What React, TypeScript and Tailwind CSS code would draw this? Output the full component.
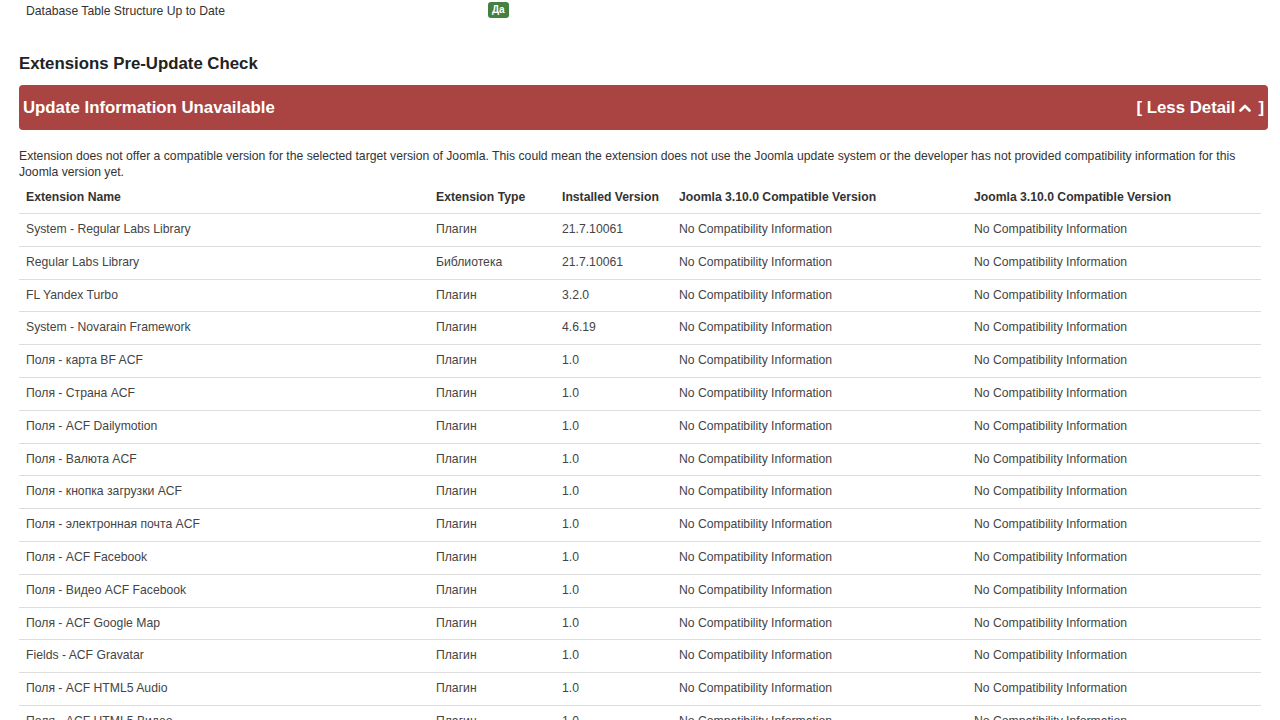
import React from "react";

const rows: [string, string, string][] = [
  ["System - Regular Labs Library", "Плагин", "21.7.10061"],
  ["Regular Labs Library", "Библиотека", "21.7.10061"],
  ["FL Yandex Turbo", "Плагин", "3.2.0"],
  ["System - Novarain Framework", "Плагин", "4.6.19"],
  ["Поля - карта BF ACF", "Плагин", "1.0"],
  ["Поля - Страна ACF", "Плагин", "1.0"],
  ["Поля - ACF Dailymotion", "Плагин", "1.0"],
  ["Поля - Валюта ACF", "Плагин", "1.0"],
  ["Поля - кнопка загрузки ACF", "Плагин", "1.0"],
  ["Поля - электронная почта ACF", "Плагин", "1.0"],
  ["Поля - ACF Facebook", "Плагин", "1.0"],
  ["Поля - Видео ACF Facebook", "Плагин", "1.0"],
  ["Поля - ACF Google Map", "Плагин", "1.0"],
  ["Fields - ACF Gravatar", "Плагин", "1.0"],
  ["Поля - ACF HTML5 Audio", "Плагин", "1.0"],
  ["Поля - ACF HTML5 Видео", "Плагин", "1.0"],
  ["Поля - ACF Iframe", "Плагин", "1.0"],
];

export default function App() {
  return (
    <div
      className="w-[1280px] h-[720px] overflow-hidden bg-white text-[#333] text-[12.2px]"
      style={{ fontFamily: '"Liberation Sans", Arial, sans-serif' }}
    >
      <div className="flex items-center h-[22px] pl-[26px]">
        <div className="w-[462px] leading-[16px] -mt-[1px]">Database Table Structure Up to Date</div>
        <span className="inline-flex items-center justify-center h-[16px] px-[4px] rounded-[3px] bg-[#44803f] text-white text-[10px] font-bold leading-none -mt-[2px]">
          Да
        </span>
      </div>

      <div className="pl-[19px] pr-[12px]">
        <h2 className="mt-[32px] text-[16.8px] font-bold leading-[20px] text-[#222]">Extensions Pre-Update Check</h2>

        <div className="mt-[11px] h-[45px] rounded-[4px] bg-[#a94442] text-white flex items-center justify-between pl-[4px] pr-[4px]">
          <span className="text-[16.8px] font-bold">Update Information Unavailable</span>
          <span className="text-[16.8px] font-bold flex items-center">
            [ Less Detail
            <svg width="12" height="10" viewBox="0 0 12 10" className="ml-[4px] mr-[7px] mt-[1px]">
              <path d="M1.5 7.5 L6 3 L10.5 7.5" stroke="white" strokeWidth="2.6" fill="none" strokeLinecap="round" strokeLinejoin="round" />
            </svg>
            ]
          </span>
        </div>

        <p className="mt-[18px] leading-[16px] pr-[20px]">
          Extension does not offer a compatible version for the selected target version of Joomla. This could mean the extension does not use the Joomla update system or the developer has not provided compatibility information for this Joomla version yet.
        </p>

        <table className="w-[1242px] table-fixed border-collapse mt-[1px]">
          <colgroup>
            <col className="w-[410px]" />
            <col className="w-[126px]" />
            <col className="w-[117px]" />
            <col className="w-[295px]" />
            <col className="w-[294px]" />
          </colgroup>
          <thead>
            <tr className="border-b border-[#ddd]">
              <th className="text-left font-bold px-[7px] py-[8px] leading-[16px]">Extension Name</th>
              <th className="text-left font-bold px-[7px] py-[8px] leading-[16px]">Extension Type</th>
              <th className="text-left font-bold px-[7px] py-[8px] leading-[16px]">Installed Version</th>
              <th className="text-left font-bold px-[7px] py-[8px] leading-[16px]">Joomla 3.10.0 Compatible Version</th>
              <th className="text-left font-bold px-[7px] py-[8px] leading-[16px]">Joomla 3.10.0 Compatible Version</th>
            </tr>
          </thead>
          <tbody className="text-[#444]">
            {rows.map((r, i) => (
              <tr key={i} className="border-b border-[#ddd]">
                <td className="px-[7px] py-[8px] leading-[15.8px]">{r[0]}</td>
                <td className="px-[7px] py-[8px] leading-[15.8px]">{r[1]}</td>
                <td className="px-[7px] py-[8px] leading-[15.8px]">{r[2]}</td>
                <td className="px-[7px] py-[8px] leading-[15.8px]">No Compatibility Information</td>
                <td className="px-[7px] py-[8px] leading-[15.8px]">No Compatibility Information</td>
              </tr>
            ))}
          </tbody>
        </table>
      </div>
    </div>
  );
}
